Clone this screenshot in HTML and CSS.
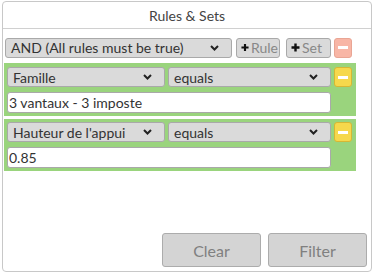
FILE: index.html
```html
<!DOCTYPE html>
<html>
<head>
<meta charset="utf-8">
<link rel="stylesheet" href="styles.css">
</head>
<body>
<div class="panel">
  <div class="header">Rules &amp; Sets</div>
  <div class="content">
    <div class="toolbar">
      <div class="select sel-cond"><span>AND (All rules must be true)</span><svg class="chev" width="9" height="6" viewBox="0 0 9 6"><polyline points="1,1 4.5,4.5 8,1" fill="none" stroke="#222" stroke-width="2"/></svg></div>
      <div class="btn btn-rule"><svg width="9" height="9" viewBox="0 0 9 9"><path d="M4.5 0.5v8M0.5 4.5h8" stroke="#111" stroke-width="2.4"/></svg><span>Rule</span></div>
      <div class="btn btn-set"><svg width="9" height="9" viewBox="0 0 9 9"><path d="M4.5 0.5v8M0.5 4.5h8" stroke="#111" stroke-width="2.4"/></svg><span>Set</span></div>
      <div class="minus minus-red"><span class="bar"></span></div>
    </div>
    <div class="rule">
      <div class="rule-row">
        <div class="select sel-field"><span>Famille</span><svg class="chev" width="9" height="6" viewBox="0 0 9 6"><polyline points="1,1 4.5,4.5 8,1" fill="none" stroke="#222" stroke-width="2"/></svg></div>
        <div class="select sel-op"><span>equals</span><svg class="chev" width="9" height="6" viewBox="0 0 9 6"><polyline points="1,1 4.5,4.5 8,1" fill="none" stroke="#222" stroke-width="2"/></svg></div>
        <div class="minus minus-yellow"><span class="bar"></span></div>
      </div>
      <div class="input">3 vantaux - 3 imposte</div>
    </div>
    <div class="rule">
      <div class="rule-row">
        <div class="select sel-field"><span>Hauteur de l'appui</span><svg class="chev" width="9" height="6" viewBox="0 0 9 6"><polyline points="1,1 4.5,4.5 8,1" fill="none" stroke="#222" stroke-width="2"/></svg></div>
        <div class="select sel-op"><span>equals</span><svg class="chev" width="9" height="6" viewBox="0 0 9 6"><polyline points="1,1 4.5,4.5 8,1" fill="none" stroke="#222" stroke-width="2"/></svg></div>
        <div class="minus minus-yellow"><span class="bar"></span></div>
      </div>
      <div class="input">0.85</div>
    </div>
  </div>
  <div class="footer">
    <div class="fbtn">Clear</div>
    <div class="fbtn">Filter</div>
  </div>
</div>
</body>
</html>
```
FILE: styles.css
```css
* { box-sizing: border-box; }
html, body { margin: 0; padding: 0; background: #fff; }
body {
  font-family: Lato, "Open Sans", sans-serif;
  font-size: 14px;
  color: #333;
}
.panel {
  margin: 1px 3px 0 2px;
  width: 370px;
  height: 271px;
  border: 1px solid #c8c8c8;
  border-radius: 4px;
  display: flex;
  flex-direction: column;
}
.header {
  height: 27px;
  border-bottom: 1px solid #d0d0d0;
  display: flex;
  align-items: center;
  justify-content: center;
  font-size: 14px;
  color: #444;
}
.content {
  flex: 1;
  padding: 8px 14px 0 1px;
  display: flex;
  flex-direction: column;
}
.toolbar {
  display: flex;
  align-items: center;
  padding-left: 1px;
  height: 21px;
  margin-bottom: 5px;
}
.select {
  height: 20px;
  background: #dadada;
  border: 1px solid #a9a9a9;
  border-radius: 3px;
  display: flex;
  align-items: center;
  justify-content: space-between;
  padding: 0 12px 0 5px;
  color: #333;
  white-space: nowrap;
}
.sel-cond { width: 227px; }
.chev { flex: none; }
.btn {
  height: 20px;
  background: #dadada;
  border: 1px solid #a9a9a9;
  border-radius: 3px;
  display: flex;
  align-items: center;
  padding: 0 1px 0 4px;
  gap: 2px;
  color: #888;
}
.btn-rule { width: 44px; margin-left: 4px; }
.btn-set { width: 45px; margin-left: 6px; }
.minus {
  width: 18px;
  height: 20px;
  border-radius: 3px;
  display: flex;
  align-items: center;
  justify-content: center;
}
.minus .bar {
  display: block;
  width: 10px;
  height: 3px;
  background: #fff;
}
.minus-red {
  margin-left: 3px;
  background: #f8b6a6;
  border: 1px solid #e9a594;
}
.minus-yellow {
  background: #f6d84c;
  border: 1px solid #d6b734;
}
.rule {
  width: 352px;
  background: #9ad47d;
  padding: 3px 4px 3px 3px;
  margin-top: 3px;
  display: flex;
  flex-direction: column;
  gap: 5px;
}
.toolbar + .rule { margin-top: 0; padding-top: 4px; }
.rule-row {
  display: flex;
  gap: 3px;
}
.sel-field { width: 158px; }
.sel-op { width: 163px; }
.input {
  width: 324px;
  height: 21px;
  background: #fff;
  border: 1px solid #a9a9a9;
  border-radius: 3px;
  display: flex;
  align-items: center;
  padding-left: 1px;
  color: #333;
}
.footer {
  display: flex;
  justify-content: flex-end;
  gap: 7px;
  padding: 0 4px 4px 0;
}
.fbtn {
  width: 99px;
  height: 34px;
  background: #d4d4d4;
  border: 1px solid #acacac;
  border-radius: 3px;
  display: flex;
  align-items: center;
  justify-content: center;
  font-size: 16px;
  color: #808080;
}
```
